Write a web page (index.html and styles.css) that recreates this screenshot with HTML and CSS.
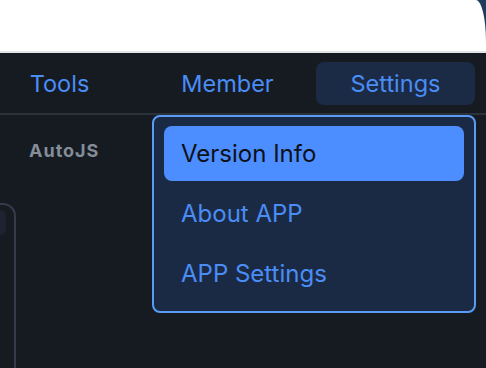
FILE: index.html
```html
<!DOCTYPE html>
<html lang="en">
<head>
    <meta charset="UTF-8">
    <meta name="viewport" content="width=device-width, initial-scale=1.0">
    <title>Settings Menu</title>
    <link rel="stylesheet" href="styles.css">
</head>
<body>
    <header class="top-frame">
        <div class="top-sheet"></div>
    </header>

    <nav class="nav-bar">
        <div class="nav-items">
            <a class="nav-item">Tools</a>
            <a class="nav-item">Member</a>
            <a class="nav-item active">Settings</a>
        </div>

        <!-- dropdown for the Settings tab -->
        <ul class="dropdown">
            <li class="dropdown-item selected">Version Info</li>
            <li class="dropdown-item">About APP</li>
            <li class="dropdown-item">APP Settings</li>
        </ul>
    </nav>

    <main class="workspace">
        <aside class="side-card">
            <div class="side-tab"></div>
        </aside>
        <section class="app-area">
            <h3 class="app-name">AutoJS</h3>
        </section>
    </main>
</body>
</html>
```

FILE: styles.css
```css
html, body {
    height: 100%;
}
body {
    margin: 0;
    background-color: #161b22;
    font-family: Inter, "Noto Sans", sans-serif;
    overflow: hidden;
    display: flex;
    flex-direction: column;
}
.top-frame {
    background-color: #1f3a5b;
    border-bottom: 2px solid #e2e4e7;
}
.top-sheet {
    height: 51px;
    background-color: #ffffff;
    border-top-right-radius: 10px 42px;
}
.nav-bar {
    position: relative;
    height: 60px;
    background-color: #161b22;
    border-bottom: 2px solid #2c323c;
}
.nav-items {
    display: grid;
    grid-template-columns: repeat(3, 168px);
    margin-left: -25px;
    height: 100%;
    align-items: center;
}
.nav-item {
    margin: 0 4px 0 5px;
    height: 43px;
    line-height: 43px;
    text-align: center;
    font-size: 23.5px;
    color: #4a8df6;
    border-radius: 8px;
    cursor: pointer;
}
.nav-item.active {
    background-color: #1c2b45;
}
.dropdown {
    position: absolute;
    top: calc(100% + 2px);
    right: 10px;
    width: 300px;
    margin: 0;
    padding: 9px 10px 10px;
    list-style: none;
    background-color: #1b2a44;
    border: 2px solid #5a9bf8;
    border-radius: 8px;
    z-index: 1;
}
.dropdown-item {
    height: 55px;
    line-height: 55px;
    padding-left: 17px;
    margin-bottom: 5px;
    font-size: 24px;
    color: #4a8df6;
    border-radius: 8px;
}
.dropdown-item:last-child {
    margin-bottom: 0;
}
.dropdown-item.selected {
    background-color: #4c8dff;
    color: #0d1117;
}
.workspace {
    flex: 1;
    display: flex;
}
.side-card {
    width: 39px;
    margin-left: -25px;
    margin-top: 88px;
    border: 2px solid #343c4b;
    border-bottom: none;
    border-left: none;
    border-top-right-radius: 13px;
}
.side-tab {
    width: 31px;
    height: 25px;
    margin-top: 5px;
    background-color: #1d2331;
    border-radius: 0 6px 6px 0;
}
.app-area {
    padding-left: 13px;
}
.app-name {
    margin: 25px 0 0;
    font-size: 18px;
    font-weight: 700;
    letter-spacing: 1px;
    color: #848d98;
}
```
